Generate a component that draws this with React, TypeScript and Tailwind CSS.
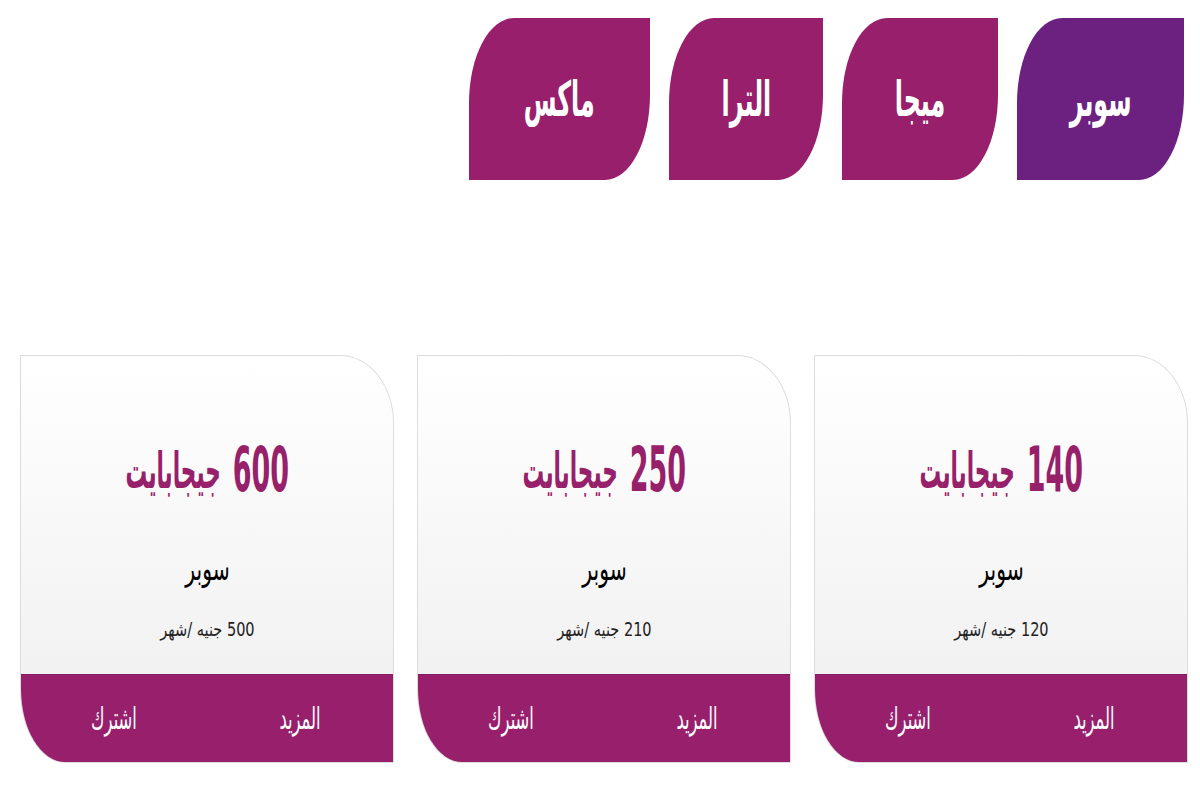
const tabs = [
  { name: 'سوبر', w: 'w-[167px]', bg: 'bg-[#6c2181]' },
  { name: 'ميجا', w: 'w-[156px]', bg: 'bg-[#981f6c]' },
  { name: 'الترا', w: 'w-[154px]', bg: 'bg-[#981f6c]' },
  { name: 'ماكس', w: 'w-[181px]', bg: 'bg-[#981f6c]' },
];

const plans = [
  { gb: 140, price: 120 },
  { gb: 250, price: 210 },
  { gb: 600, price: 500 },
];

function PlanCard({ gb, price }: { gb: number; price: number }) {
  return (
    <div className="w-[374px] h-[408px] flex flex-col overflow-hidden border border-[#dcdcdc] rounded-tr-[54px_68px] rounded-bl-[45px_74px] bg-gradient-to-b from-white to-[#eeeeee]">
      <div className="flex-1 flex flex-col items-center pt-[90px]">
        <h2 className="h-[48px] flex items-center gap-[20px] leading-none font-bold text-[#97206b] scale-x-[0.6] scale-y-[1.25] whitespace-nowrap">
          <span className="text-[50px]">{gb}</span>
          <span className="text-[40px]">جيجابايت</span>
        </h2>
        <p className="mt-[60px] text-[30px] leading-none text-black scale-x-[0.75] scale-y-[1.1]">سوبر</p>
        <p className="mt-[36px] text-[19px] leading-none text-[#222] scale-x-[0.85] whitespace-nowrap">{price} جنيه /شهر</p>
      </div>
      <div className="h-[88px] grid grid-cols-2 items-center bg-[#981f6c] text-white text-[28px] leading-none border-t border-[#84185c]">
        <span className="text-center scale-x-[0.65] scale-y-[1.1]">المزيد</span>
        <span className="text-center scale-x-[0.65] scale-y-[1.1]">اشترك</span>
      </div>
    </div>
  );
}

export default function App() {
  return (
    <div
      dir="rtl"
      className="w-[1200px] h-[800px] bg-white overflow-hidden"
      style={{ fontFamily: '"DejaVu Sans Condensed", "DejaVu Sans", sans-serif' }}
    >
      <div className="flex gap-[19px] pr-[16px] pt-[18px]">
        {tabs.map((t) => (
          <div
            key={t.name}
            className={`${t.w} ${t.bg} h-[162px] flex items-center justify-center rounded-tl-[45px_85px] rounded-br-[45px_85px]`}
          >
            <span className="text-white text-[44px] leading-none font-bold scale-x-[0.6] scale-y-[1.1]">{t.name}</span>
          </div>
        ))}
      </div>

      <div className="flex gap-[23px] pr-[12px] mt-[175px]">
        {plans.map((p) => (
          <PlanCard key={p.gb} gb={p.gb} price={p.price} />
        ))}
      </div>
    </div>
  );
}
